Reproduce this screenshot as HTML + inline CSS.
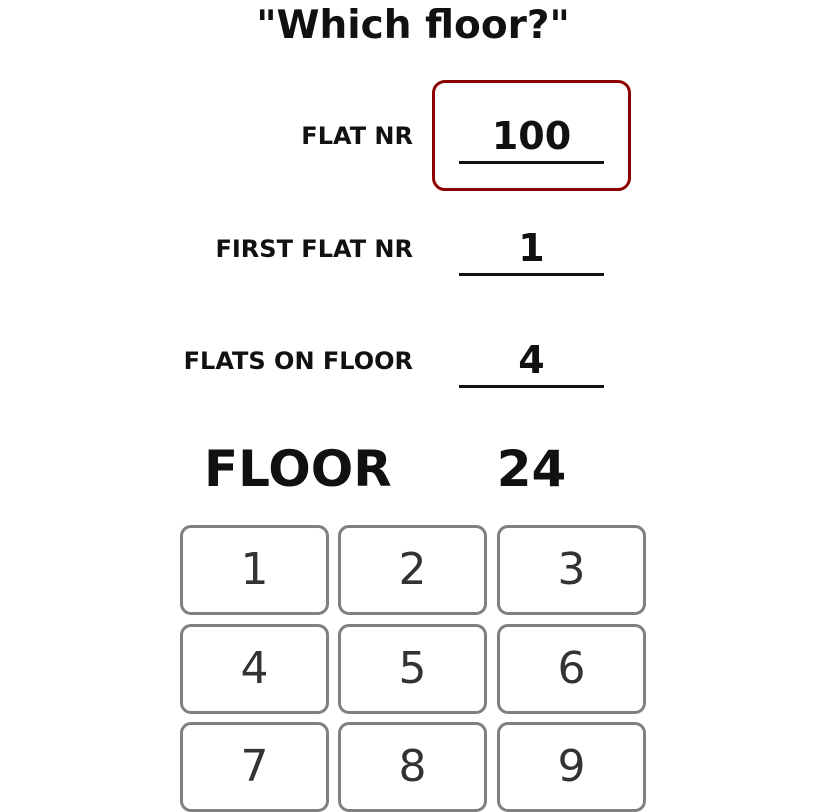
<!DOCTYPE html>
<html><head><meta charset="utf-8"><style>
body{margin:0;width:826px;height:773px;overflow:hidden;background:#fff;font-family:"DejaVu Sans","Liberation Sans",sans-serif;position:relative}
.a{position:absolute}
.t{left:0;width:826px;text-align:center;top:3px;font-size:39px;font-weight:bold;color:#111}
.l{right:413px;font-size:24px;font-weight:bold;color:#111;text-align:right;white-space:nowrap}
.v{left:459px;width:145px;text-align:center;font-size:38px;font-weight:bold;color:#111;border-bottom:3px solid #111;height:48px;line-height:46px}
.box{left:432px;top:80px;width:193px;height:105px;border:3px solid #8b0000;border-radius:13px}
.b{width:143px;height:84px;border:3px solid #808080;border-radius:11px;text-align:center;line-height:84px;font-size:44px;color:#333;box-sizing:content-box}
</style></head><body>
<div class="a t">"Which floor?"</div>
<div class="a box"></div>
<div class="a l" style="top:122px">FLAT NR</div>
<div class="a v" style="top:113px">100</div>
<div class="a l" style="top:235px">FIRST FLAT NR</div>
<div class="a v" style="top:225px">1</div>
<div class="a l" style="top:347px">FLATS ON FLOOR</div>
<div class="a v" style="top:337px">4</div>
<div class="a" style="left:204px;top:440px;font-size:50px;font-weight:bold;color:#111">FLOOR</div>
<div class="a" style="left:459px;width:145px;text-align:center;top:440px;font-size:50px;font-weight:bold;color:#111">24</div>
<div class="a b" style="left:180px;top:525px">1</div>
<div class="a b" style="left:338px;top:525px">2</div>
<div class="a b" style="left:497px;top:525px">3</div>
<div class="a b" style="left:180px;top:624px">4</div>
<div class="a b" style="left:338px;top:624px">5</div>
<div class="a b" style="left:497px;top:624px">6</div>
<div class="a b" style="left:180px;top:722px">7</div>
<div class="a b" style="left:338px;top:722px">8</div>
<div class="a b" style="left:497px;top:722px">9</div>
</body></html>
